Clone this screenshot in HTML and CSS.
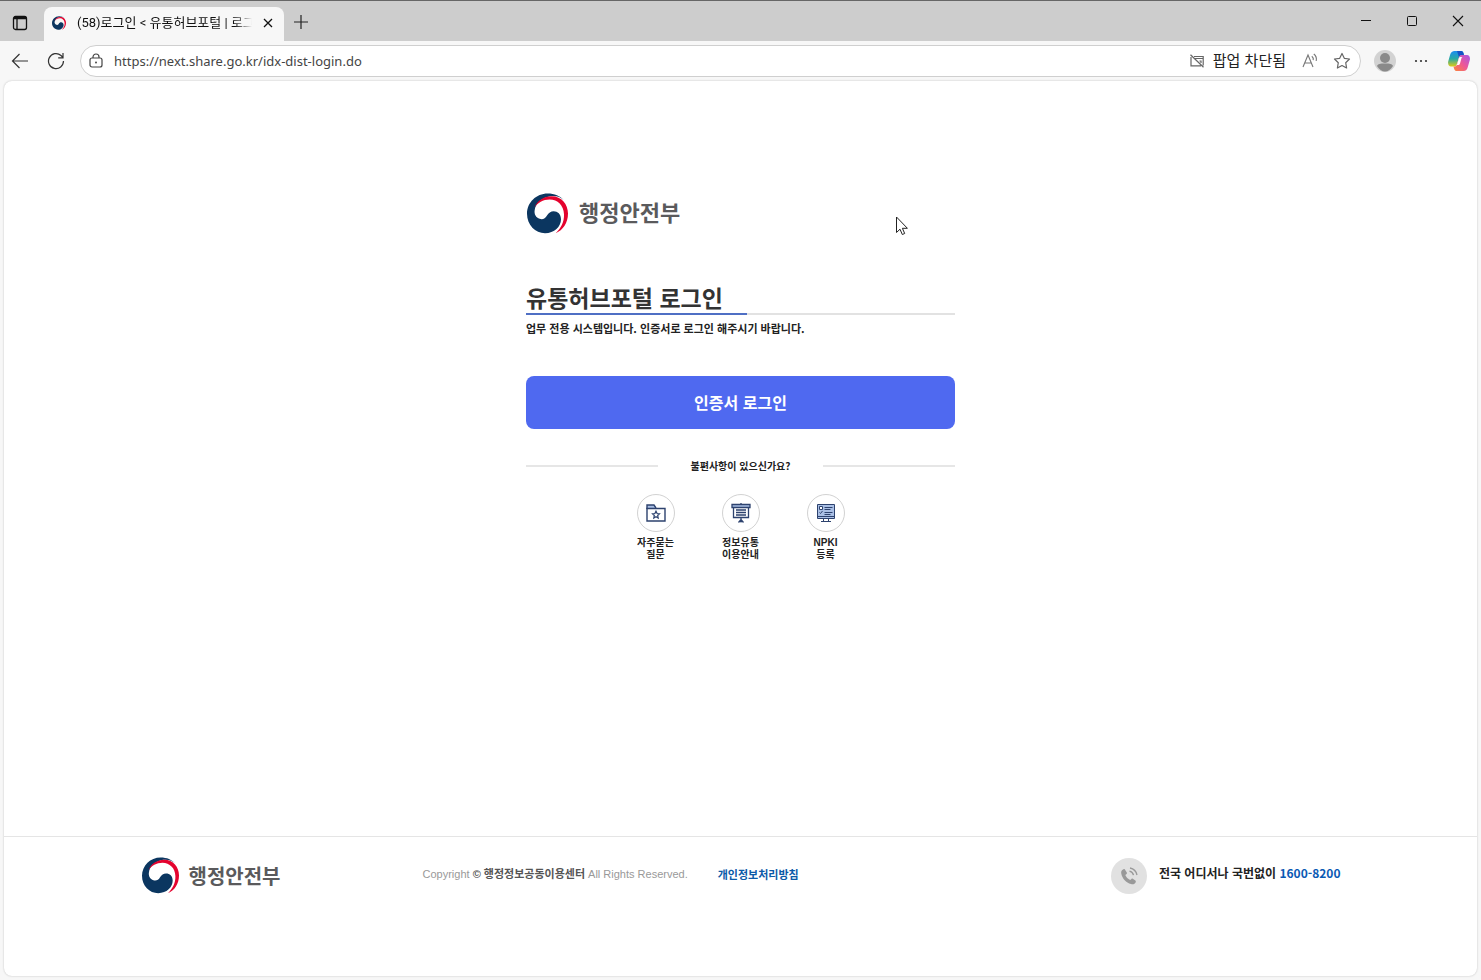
FILE: index.html
```html
<!DOCTYPE html>
<html lang="ko">
<head>
<meta charset="utf-8">
<meta name="viewport" content="width=device-width, initial-scale=1">
<title>(58)로그인 &lt; 유통허브포털 | 로그인</title>
<link rel="stylesheet" href="styles.css">
</head>
<body>
<svg class="defs" aria-hidden="true">
  <symbol id="emblem" viewBox="0 0 123 120">
    <path fill="#0b3660" d="M62 0C28 0 0 27 0 61c0 34 25 58 54 58 28 0 48-20 48-42 0-16-10-24-22-24-9 0-15 5-20 13-5 9-13 13-22 10-11-4-17-14-15-26C25 30 45 12 70 8c18-2 32 3 40 12C100 7 82 0 62 0z"/>
    <path fill="#e4032e" d="M22 42C30 22 50 8 74 8c30 0 49 24 49 52 0 28-15 50-37 59 16-15 26-34 25-57C110 36 92 18 68 18c-20 0-36 10-46 24z"/>
  </symbol>
</svg>

<header class="browser">
  <div class="tabstrip">
    <button class="icon-btn workspace" aria-label="탭 작업 메뉴">
      <svg width="16" height="16" viewBox="0 0 16 16" fill="none" stroke="#111" stroke-width="1.3"><rect x="1.500" y="1.500" width="13" height="13" rx="2"/><path d="M2 3.500h12M5 4v10" /><path d="M2 2.800h12" stroke-width="2.400"/></svg>
    </button>
    <div class="tab">
      <svg class="favicon" aria-hidden="true"><use href="#emblem"/></svg>
      <span class="tab-title">(58)로그인 &lt; 유통허브포털 | 로그인</span>
      <button class="icon-btn tab-close" aria-label="탭 닫기">
        <svg width="10" height="10" viewBox="0 0 10 10" stroke="#111" stroke-width="1.3"><path d="M1 1l8 8M9 1l-8 8"/></svg>
      </button>
    </div>
    <button class="icon-btn new-tab" aria-label="새 탭">
      <svg width="14" height="14" viewBox="0 0 14 14" stroke="#222" stroke-width="1.2"><path d="M7 0v14M0 7h14"/></svg>
    </button>
    <div class="window-controls">
      <button class="icon-btn" aria-label="최소화"><svg width="12" height="12" viewBox="0 0 12 12" stroke="#111"><path d="M1 5.500h10"/></svg></button>
      <button class="icon-btn" aria-label="최대화"><svg width="12" height="12" viewBox="0 0 12 12" fill="none" stroke="#111"><rect x="1.500" y="1.500" width="9" height="9" rx="1"/></svg></button>
      <button class="icon-btn" aria-label="닫기"><svg width="12" height="12" viewBox="0 0 12 12" stroke="#111" stroke-width="1.100"><path d="M1 1l10 10M11 1L1 11"/></svg></button>
    </div>
  </div>
  <div class="toolbar">
    <button class="icon-btn nav-btn" aria-label="뒤로"><svg width="18" height="16" viewBox="0 0 18 16" fill="none" stroke="#333" stroke-width="1.200"><path d="M17 8H1.500M8.500 1l-7 7 7 7"/></svg></button>
    <button class="icon-btn nav-btn" aria-label="새로 고침"><svg width="18" height="18" viewBox="0 0 18 18" fill="none" stroke="#333" stroke-width="1.200"><path d="M16.500 9A7.500 7.500 0 1 1 14 3.500l2 2M16 1v4.800h-4.800"/></svg></button>
    <form class="address">
      <svg width="14" height="16" viewBox="0 0 14 16" fill="none" stroke="#444" stroke-width="1.200" aria-hidden="true"><rect x="1" y="5" width="12" height="9" rx="2"/><path d="M4 5V4a3 3 0 0 1 6 0v1"/><circle cx="7" cy="9.500" r=".4" fill="#444"/></svg>
      <input class="url" type="text" aria-label="주소" value="https://next.share.go.kr/idx-dist-login.do">
      <button type="button" class="popup-blocked">
        <svg width="14" height="14" viewBox="0 0 14 14" fill="none" stroke="#666" stroke-width="1.200" aria-hidden="true"><path d="M4 2.500h9.200v9M11 11.800H1V3M5 4.500h8M9.500 7H11v2M.5.800l13 12.500"/></svg>
        <span>팝업 차단됨</span>
      </button>
      <button type="button" class="icon-btn" aria-label="소리내어 읽기"><svg width="16" height="16" viewBox="0 0 16 16" fill="none" stroke="#777" stroke-width="1.100"><path d="M1 14L6 2l5 12M2.800 10h6.400M9.800 3.200a4 4 0 0 1 1.400 4M11.800 1a7 7 0 0 1 2.400 7"/></svg></button>
      <button type="button" class="icon-btn" aria-label="즐겨찾기에 추가"><svg width="18" height="18" viewBox="0 0 18 18" fill="none" stroke="#666" stroke-width="1.200" stroke-linejoin="round"><path d="M9 1.500l2.300 4.800 5.200.7-3.800 3.700.9 5.300L9 13.500 4.400 16l.9-5.300L1.500 7l5.200-.7z"/></svg></button>
    </form>
    <button class="icon-btn profile" aria-label="프로필"><svg width="22" height="22" viewBox="0 0 22 22"><circle cx="11" cy="11" r="11" fill="#d2d2d2"/><circle cx="11" cy="8" r="5" fill="#8a8a8a"/><path fill="#8a8a8a" d="M3 16c1-2 3-2.500 8-2.500s7 .5 8 2.500c-2 3.500-5 5.500-8 5.500S5 19.500 3 16z"/></svg></button>
    <button class="icon-btn more" aria-label="설정 및 기타"><svg width="14" height="4" viewBox="0 0 14 4" fill="#333"><circle cx="2" cy="2" r="1.100"/><circle cx="7" cy="2" r="1.100"/><circle cx="12" cy="2" r="1.100"/></svg></button>
    <button class="icon-btn copilot" aria-label="Copilot">
      <svg width="22" height="20" viewBox="0 0 22 20">
        <defs>
          <linearGradient id="cool" x1="0" y1="0" x2="0" y2="1"><stop offset="0" stop-color="#1b8df0"/><stop offset=".5" stop-color="#27a9a5"/><stop offset="1" stop-color="#e0cc13"/></linearGradient>
          <linearGradient id="warm" x1="1" y1="0" x2="0" y2="1"><stop offset="0" stop-color="#a557e8"/><stop offset=".5" stop-color="#ee5797"/><stop offset="1" stop-color="#fb8637"/></linearGradient>
        </defs>
        <path fill="url(#cool)" d="M6.500 0H13c2 0 2.500 1.500 3 4h-2c-2 0-2.600 1-3 2.500L9 13c-.5 1.500-1 2.500-3 2.500H3C1 15.500-.4 13 .2 10.500l2-7C2.900 1.300 4.500 0 6.500 0z"/>
        <path fill="#1553c5" d="M9 0h4c2 0 2.500 1.500 3 4.500h-2c-2 0-2.600.5-3 2z"/>
        <path fill="url(#warm)" d="M15.500 20H9c-2.500 0-2.800-2-3.500-4.500C8 15.500 8.500 15 9 13.500l2-7C11.400 5 12 4 14 4h5c2.200 0 3.500 2.500 2.800 5l-2 7c-.7 2.500-1.800 4-4.300 4z"/>
        <path fill="#fff" d="M12.400 6h2.200c-.7 0-1 .8-1.200 1.500L12 12.500c-.4 1.200-1 1.500-2 1.500H8.500c.5-.3.600-.6.800-1.200l1.500-5.300C11 6.600 11.500 6 12.400 6z"/>
      </svg>
    </button>
  </div>
</header>

<div class="page">
  <main class="login">
    <div class="brand brand-large"><svg class="brand-mark" aria-hidden="true"><use href="#emblem"/></svg><span class="brand-name">행정안전부</span></div>
    <h1 class="title"><span class="title-text">유통허브포털 로그인</span></h1>
    <p class="notice">업무 전용 시스템입니다. 인증서로 로그인 해주시기 바랍니다.</p>
    <button class="cert-login">인증서 로그인</button>
    <div class="help-heading"><span>불편사항이 있으신가요?</span></div>
    <nav class="help-links">
      <a class="help-link" href="#faq">
        <span class="help-icon"><svg width="20" height="18" viewBox="0 0 20 18" fill="none" stroke="#2d426e" stroke-width="1.400"><path fill="#a9bfe5" d="M1 5V1h7l2 3"/><path fill="#fff" d="M1 4.500h18V17H1z"/><path stroke-width="1.200" d="M10 7.200l1.100 2.300 2.400.3-1.800 1.700.5 2.500-2.200-1.200L7.800 14l.5-2.500-1.800-1.700 2.400-.3z"/></svg></span>
        <span>자주묻는<br>질문</span>
      </a>
      <a class="help-link" href="#guide">
        <span class="help-icon"><svg width="20" height="20" viewBox="0 0 20 20" fill="none" stroke="#2d426e" stroke-width="1.300"><path fill="#a9bfe5" d="M1 1.500h18v3H1z"/><path d="M2.500 4.500v10h15v-10M5 7h10M5 9.500h10M5 12h10M10 14.500v5M7.500 19.500l2.500-3 2.500 3M10 0v1.500"/></svg></span>
        <span>정보유통<br>이용안내</span>
      </a>
      <a class="help-link" href="#npki">
        <span class="help-icon"><svg width="20" height="20" viewBox="0 0 20 20" fill="none" stroke="#2d426e" stroke-width="1"><path fill="#a9bfe5" d="M1.500 1.500h17v14h-17z"/><path fill="#fff" d="M3.500 3.500h3v3h-3z"/><path d="M8.500 4.500h8M8.500 6.500h6M3.500 9.500l1 1 2-2.500M8.500 9.500h8M8.500 11.500h6M1.500 13.500h17M7.500 15.500v3M12.500 15.500v3M5 18.500h10"/></svg></span>
        <span>NPKI<br>등록</span>
      </a>
    </nav>
  </main>
  <footer class="footer">
    <div class="footer-inner">
      <div class="brand brand-small"><svg class="brand-mark" aria-hidden="true"><use href="#emblem"/></svg><span>행정안전부</span></div>
      <p class="copyright">Copyright <strong>© 행정정보공동이용센터</strong> All Rights Reserved.</p>
      <a class="privacy" href="#privacy">개인정보처리방침</a>
      <div class="contact">
        <svg class="phone" viewBox="0 0 36 36" aria-hidden="true"><circle cx="18" cy="18" r="18" fill="#e1e1e1"/><path fill="#999" d="M12.500 11.200c-2 .8-2.700 2.300-2.200 4.600 1.200 5.200 4.700 9 9.700 10.300 2.300.6 4-.2 4.800-2.100.2-.6 0-1-.4-1.400l-2.600-1.900c-.5-.3-1-.2-1.400.2l-1.200 1.200c-2.300-1-4-2.700-4.900-5l1.300-1.200c.4-.4.5-.8.200-1.400l-1.900-3c-.4-.4-.8-.5-1.400-.3z"/><path fill="none" stroke="#999" stroke-width="1.300" d="M18.500 13.200c2 .5 3.500 2 4 4M19 10c3.700.8 6.200 3.300 7 7"/></svg>
        <p class="contact-text">전국 어디서나 국번없이 <a href="tel:1600-8200">1600-8200</a></p>
      </div>
    </div>
  </footer>
  <svg class="pointer" width="12" height="20" viewBox="0 0 12 20" aria-hidden="true"><path fill="#fff" stroke="#222" d="M.5 1v15.500L4 13.200l2.300 5.300 2.400-1-2.300-5.200h5z"/></svg>
</div>
</body>
</html>
```
FILE: styles.css
```css
* { box-sizing: border-box; }

body {
  margin: 0;
  min-height: 100vh;
  display: flex;
  flex-direction: column;
  background: #f7f7f7;
  color: #222;
  font-family: "Noto Sans CJK KR", sans-serif;
}

button, input { font: inherit; color: inherit; }
button { border: 0; padding: 0; background: none; cursor: pointer; }
a { color: inherit; text-decoration: none; }
p, h1 { margin: 0; }
.defs { position: absolute; width: 0; height: 0; }

.icon-btn { display: flex; align-items: center; justify-content: center; flex: none; }

/* Browser frame */
.tabstrip {
  display: flex;
  align-items: stretch;
  height: 41px;
  background: #cdcdcd;
  border-top: 1px solid #666;
}
.workspace { width: 40px; padding-top: 4px; }
.tab {
  display: flex;
  align-items: center;
  width: 240px;
  margin: 6px 0 0 4px;
  padding: 0 6px 3px 8px;
  background: #f7f7f7;
  border-radius: 8px 8px 0 0;
}
.favicon { width: 14px; height: 14px; flex: none; }
.tab-title {
  flex: 1;
  margin-left: 11px;
  overflow: hidden;
  white-space: nowrap;
  font-family: Roboto, "Noto Sans CJK KR", sans-serif;
  font-size: 13px;
  line-height: 20px;
  color: #111;
  -webkit-mask-image: linear-gradient(to right, #000 90%, transparent);
  mask-image: linear-gradient(to right, #000 90%, transparent);
}
.tab-close { width: 20px; height: 20px; margin-left: 6px; }
.new-tab { width: 34px; padding-top: 2px; }
.window-controls { display: flex; margin-left: auto; }
.window-controls .icon-btn { width: 46px; }

.toolbar { display: flex; align-items: center; height: 40px; padding-left: 2px; }
.nav-btn { width: 36px; height: 32px; }
.address {
  flex: 1;
  display: flex;
  align-items: center;
  height: 32px;
  margin-left: 6px;
  padding: 0 9px 0 8px;
  background: #fff;
  border: 1px solid #cfcfcf;
  border-radius: 16px;
}
.url {
  flex: 1;
  min-width: 0;
  margin-left: 11px;
  padding: 0;
  border: 0;
  outline: 0;
  background: none;
  font-family: "Noto Sans", sans-serif;
  font-size: 13px;
  color: #444;
}
.popup-blocked {
  display: flex;
  align-items: center;
  gap: 9px;
  margin-right: 16px;
  font-size: 15px;
  line-height: 20px;
}
.popup-blocked span { padding-bottom: 2px; }
.address .icon-btn + .icon-btn { margin-left: 15px; }
.profile { width: 36px; margin-left: 6px; }
.more { width: 36px; }
.copilot { width: 42px; padding-right: 2px; }

/* Page */
.page {
  position: relative;
  flex: 1;
  display: flex;
  flex-direction: column;
  margin: 0 4px 4px;
  background: #fff;
  border-radius: 8px;
  box-shadow: 0 0 2px #bbb;
}
.login {
  flex: 1;
  width: 100%;
  max-width: 429px;
  margin: 0 auto;
  padding-top: 112px;
}
.brand { display: flex; align-items: center; padding-left: 1px; font-weight: 700; color: #5a5a5c; }
.brand-large { gap: 11px; font-size: 22px; line-height: 34px; }
.brand-large .brand-mark { width: 41px; height: 41px; }
.brand-name { padding-bottom: 6px; }
.brand-small { gap: 10px; font-size: 20px; line-height: 36px; }
.brand-small .brand-mark { width: 37px; height: 37px; }

.title {
  display: flex;
  margin-top: 47px;
  font-size: 23px;
  line-height: 32px;
  color: #333;
}
.title-text { padding-right: 24px; border-bottom: 2px solid #4f6fc4; }
.title::after { content: ""; flex: 1; border-bottom: 2px solid #e2e2e2; }
.notice { margin-top: 5px; font-size: 11px; line-height: 16px; font-weight: 700; }
.cert-login {
  display: block;
  width: 100%;
  margin-top: 40px;
  padding: 14px;
  border-radius: 8px;
  background: #4f69f0;
  color: #fff;
  font-size: 16px;
  line-height: 25px;
  font-weight: 700;
}
.help-heading {
  display: flex;
  align-items: center;
  justify-content: space-between;
  margin-top: 29px;
  font-size: 10px;
  line-height: 16px;
  font-weight: 700;
}
.help-heading::before, .help-heading::after {
  content: "";
  width: 132px;
  height: 2px;
  background: #e6e6e6;
}
.help-links { display: flex; justify-content: center; gap: 37px; margin-top: 20px; }
.help-link {
  display: flex;
  flex-direction: column;
  align-items: center;
  gap: 5px;
  width: 48px;
  text-align: center;
  font-family: "Liberation Sans", "Noto Sans CJK KR", sans-serif;
  font-size: 10px;
  line-height: 12px;
  font-weight: 700;
}
.help-icon {
  display: flex;
  align-items: center;
  justify-content: center;
  width: 38px;
  height: 38px;
  border: 1px solid #d2d2d2;
  border-radius: 50%;
}

.footer { border-top: 1px solid #e5e5e5; padding: 20px 16px 82px; }
.footer-inner { display: flex; align-items: center; max-width: 1200px; margin: 0 auto; }
.copyright, .privacy { padding-bottom: 4px; font-size: 11px; line-height: 16px; }
.copyright {
  margin-left: 142px;
  font-family: "Liberation Sans", "Noto Sans CJK KR", sans-serif;
  color: #999;
}
.copyright strong { color: #555; }
.privacy { margin-left: 30px; font-weight: 700; color: #0b5aa8; }
.contact { display: flex; align-items: center; gap: 12px; margin-left: auto; }
.phone { width: 36px; height: 36px; }
.contact-text { padding-bottom: 6px; font-size: 12px; line-height: 20px; font-weight: 700; }
.contact-text a { color: #0b5ab4; }

.pointer { position: absolute; left: 892px; top: 135px; }
```
